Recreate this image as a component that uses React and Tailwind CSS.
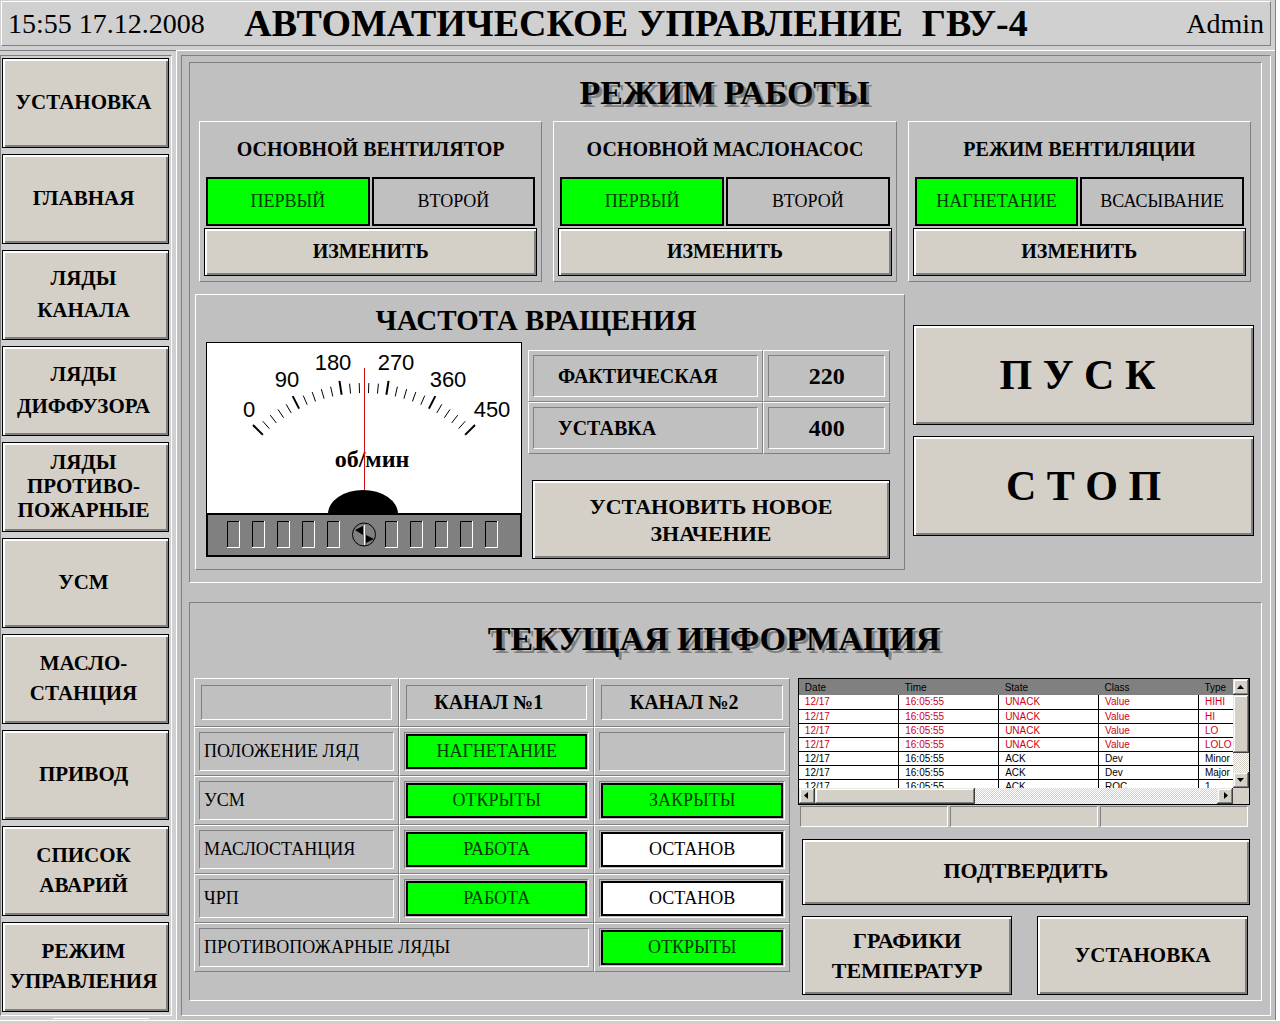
import React from "react";

const RAISED = "border border-t-white border-l-white border-b-[#808080] border-r-[#808080]";
const SUNKEN = "border border-t-[#808080] border-l-[#808080] border-b-white border-r-white";

function PushButton({ children, className = "" }) {
  return (
    <button
      type="button"
      className={`flex items-center justify-center border border-black bg-[#d4d0c8] text-center font-bold shadow-[inset_2px_2px_0_#fff,inset_-2px_-2px_0_#808080] active:shadow-[inset_2px_2px_0_#808080] ${className}`}
    >
      {children}
    </button>
  );
}

const NAV = [
  { lines: ["УСТАНОВКА"], leading: "leading-[30px]" },
  { lines: ["ГЛАВНАЯ"], leading: "leading-[30px]" },
  { lines: ["ЛЯДЫ", "КАНАЛА"], leading: "leading-[32px]" },
  { lines: ["ЛЯДЫ", "ДИФФУЗОРА"], leading: "leading-[32px]" },
  { lines: ["ЛЯДЫ", "ПРОТИВО-", "ПОЖАРНЫЕ"], leading: "leading-[24px]" },
  { lines: ["УСМ"], leading: "leading-[30px]" },
  { lines: ["МАСЛО-", "СТАНЦИЯ"], leading: "leading-[30px]" },
  { lines: ["ПРИВОД"], leading: "leading-[30px]" },
  { lines: ["СПИСОК", "АВАРИЙ"], leading: "leading-[30px]" },
  { lines: ["РЕЖИМ", "УПРАВЛЕНИЯ"], leading: "leading-[30px]" },
];

function Sidebar() {
  return (
    <nav className="flex w-44 flex-none flex-col border-t border-[#808080] pt-1 pr-1">
      <div className={`flex flex-1 flex-col gap-1.5 pt-0.5 pr-0.5 pb-[3px] pl-px ${SUNKEN}`}>
        {NAV.map((item) => (
          <PushButton
            key={item.lines.join(" ")}
            className={`min-h-[90px] w-full flex-1 pr-1 pb-0.5 text-[21px] ${item.leading}`}
          >
            <span>
              {item.lines.map((line) => (
                <span key={line} className="block">
                  {line}
                </span>
              ))}
            </span>
          </PushButton>
        ))}
      </div>
      <div className="mt-0.5 mb-px ml-[53px] h-px w-24 bg-white" />
    </nav>
  );
}

const MODES = [
  { title: "ОСНОВНОЙ ВЕНТИЛЯТОР", options: ["ПЕРВЫЙ", "ВТОРОЙ"] },
  { title: "ОСНОВНОЙ МАСЛОНАСОС", options: ["ПЕРВЫЙ", "ВТОРОЙ"] },
  { title: "РЕЖИМ ВЕНТИЛЯЦИИ", options: ["НАГНЕТАНИЕ", "ВСАСЫВАНИЕ"] },
];

function ModeCard({ title, options }) {
  return (
    <section className={`px-1 pb-[5px] ${RAISED}`}>
      <h3 className="py-3 text-center text-[20px] leading-[31px] font-bold">{title}</h3>
      <div className="grid grid-cols-2 gap-0.5 px-0.5">
        <div className="border-2 border-black bg-[#00ff00] text-center text-[18px] leading-[45px] text-[#003c00]">
          {options[0]}
        </div>
        <div className="border-2 border-black text-center text-[18px] leading-[45px]">{options[1]}</div>
      </div>
      <PushButton className="mt-0.5 h-12 w-full pb-0.5 text-[20px]">ИЗМЕНИТЬ</PushButton>
    </section>
  );
}

const CX = 158;
const CY = 194;
const TICKS = Array.from({ length: 26 }, (_, i) => {
  const a = ((-45 + i * 3.6) * Math.PI) / 180;
  const major = i % 5 === 0;
  const outer = major ? 157 : 153;
  return {
    major,
    x1: CX + outer * Math.sin(a),
    y1: CY - outer * Math.cos(a),
    x2: CX + 143 * Math.sin(a),
    y2: CY - 143 * Math.cos(a),
  };
});
const SCALE = [
  { t: "0", x: 43, y: 75 },
  { t: "90", x: 81, y: 45 },
  { t: "180", x: 127, y: 28 },
  { t: "270", x: 190, y: 28 },
  { t: "360", x: 242, y: 45 },
  { t: "450", x: 286, y: 75 },
];
const SLOTS = [21, 46, 71, 96, 121, 179, 204, 229, 254, 279];

function Gauge() {
  return (
    <svg viewBox="0 0 316 215" className="block w-full" role="img" aria-label="об/мин">
      <rect x="0.5" y="0.5" width="315" height="214" fill="#fff" stroke="#000" />
      {TICKS.map((t, i) => (
        <line key={i} x1={t.x1} y1={t.y1} x2={t.x2} y2={t.y2} stroke="#000" strokeWidth={t.major ? 2 : 1} />
      ))}
      {SCALE.map((s) => (
        <text key={s.t} x={s.x} y={s.y} textAnchor="middle" className="font-['Liberation_Sans',sans-serif] text-[22px]">
          {s.t}
        </text>
      ))}
      <text x="166" y="125" textAnchor="middle" className="text-[24px] font-bold">
        об/мин
      </text>
      <path d="M158.5 26V150" stroke="#d01010" />
      <ellipse cx="157" cy="172" rx="35" ry="24" />
      <rect x="1" y="172" width="314" height="42" fill="#808080" stroke="#000" strokeWidth="2" />
      {SLOTS.map((x) => (
        <g key={x} fill="none">
          <path d={`M${x + 0.5} 205V179.5H${x + 13}`} stroke="#000" />
          <path d={`M${x} 205.5H${x + 12.5}V179`} stroke="#fff" />
        </g>
      ))}
      <circle cx="158" cy="192.5" r="11.5" fill="none" stroke="#000" />
      <path d="M158.5 183V203" stroke="#fff" />
      <path d="M149 188L157 184V193ZM168 197L160 193V201Z" />
    </svg>
  );
}

function SpeedPanel() {
  const rows = [
    ["ФАКТИЧЕСКАЯ", "220"],
    ["УСТАВКА", "400"],
  ];
  return (
    <section className={`pr-3.5 pb-2.5 pl-2.5 ${RAISED}`}>
      <h3 className="pt-1.5 pr-6 pb-0.5 text-center text-[29px] leading-[39px] font-bold">ЧАСТОТА ВРАЩЕНИЯ</h3>
      <div className="grid grid-cols-[316fr_362fr] gap-1.5">
        <Gauge />
        <div className="flex flex-col pt-2">
          <table className="w-full table-fixed border-separate border-spacing-0 font-bold">
            <tbody>
              {rows.map(([name, value]) => (
                <tr key={name}>
                  <th scope="row" className={`w-[65%] p-1 text-left ${RAISED}`}>
                    <div className={`pl-6 text-[20px] leading-10 ${SUNKEN}`}>{name}</div>
                  </th>
                  <td className={`p-1 text-center ${RAISED}`}>
                    <div className={`text-[24px] leading-10 ${SUNKEN}`}>{value}</div>
                  </td>
                </tr>
              ))}
            </tbody>
          </table>
          <PushButton className="mt-[26px] ml-1 h-[79px] text-[22px] leading-[27px]">
            <span>
              УСТАНОВИТЬ НОВОЕ
              <br />
              ЗНАЧЕНИЕ
            </span>
          </PushButton>
        </div>
      </div>
    </section>
  );
}

function Lamp({ text, on }) {
  return (
    <div className={`p-px ${SUNKEN}`}>
      <div
        className={`border-2 border-black text-center text-[18px] leading-[31px] ${
          on ? "bg-[#00ff00] text-[#003c00]" : "bg-white"
        }`}
      >
        {text}
      </div>
    </div>
  );
}

const STATUS = [
  { name: "ПОЛОЖЕНИЕ ЛЯД", cells: [{ t: "НАГНЕТАНИЕ", on: true }, null] },
  { name: "УСМ", cells: [{ t: "ОТКРЫТЫ", on: true }, { t: "ЗАКРЫТЫ", on: true }] },
  { name: "МАСЛОСТАНЦИЯ", cells: [{ t: "РАБОТА", on: true }, { t: "ОСТАНОВ", on: false }] },
  { name: "ЧРП", cells: [{ t: "РАБОТА", on: true }, { t: "ОСТАНОВ", on: false }] },
  { name: "ПРОТИВОПОЖАРНЫЕ ЛЯДЫ", span: 2, cells: [{ t: "ОТКРЫТЫ", on: true }] },
];

function StatusTable() {
  return (
    <table className="w-full table-fixed border-separate border-spacing-0 self-start">
      <thead>
        <tr>
          <td className={`w-[205px] p-1.5 ${RAISED}`}>
            <div className={`h-[35px] ${SUNKEN}`} />
          </td>
          {["КАНАЛ №1", "КАНАЛ №2"].map((t) => (
            <th key={t} scope="col" className={`p-1.5 ${RAISED}`}>
              <div className={`pr-4 text-[20px] leading-[33px] font-bold ${SUNKEN}`}>{t}</div>
            </th>
          ))}
        </tr>
      </thead>
      <tbody>
        {STATUS.map((row) => (
          <tr key={row.name}>
            <th scope="row" colSpan={row.span || 1} className={`p-1 text-left font-normal ${RAISED}`}>
              <div className={`pl-1 text-[18px] leading-[37px] whitespace-nowrap ${SUNKEN}`}>{row.name}</div>
            </th>
            {row.cells.map((c, i) => (
              <td key={i} className={`p-1 ${RAISED}`}>
                {c ? <Lamp text={c.t} on={c.on} /> : <div className={`h-[39px] ${SUNKEN}`} />}
              </td>
            ))}
          </tr>
        ))}
      </tbody>
    </table>
  );
}

const ALARMS = [
  ["12/17", "16:05:55", "UNACK", "Value", "HIHI"],
  ["12/17", "16:05:55", "UNACK", "Value", "HI"],
  ["12/17", "16:05:55", "UNACK", "Value", "LO"],
  ["12/17", "16:05:55", "UNACK", "Value", "LOLO"],
  ["12/17", "16:05:55", "ACK", "Dev", "Minor"],
  ["12/17", "16:05:55", "ACK", "Dev", "Major"],
  ["12/17", "16:05:55", "ACK", "ROC", "1"],
];

const TRACK = "bg-[repeating-conic-gradient(#ffffff_0_25%,#d4d0c8_0_50%)] bg-[length:2px_2px]";
const THUMB =
  "bg-[#d4d0c8] shadow-[inset_-1px_-1px_0_#404040,inset_1px_1px_0_#e8e6e0,inset_-2px_-2px_0_#808080,inset_2px_2px_0_#fff]";

function ScrollButton({ label, d }) {
  return (
    <button type="button" aria-label={label} className={`h-4 w-4 flex-none ${THUMB}`}>
      <svg viewBox="0 0 16 16" className="block h-4 w-4">
        <path d={d} />
      </svg>
    </button>
  );
}

function AlarmList() {
  return (
    <div className="grid h-[127px] grid-cols-[1fr_16px] grid-rows-[1fr_16px] border border-black bg-[#d4d0c8]">
      <div className="min-h-0 min-w-0 overflow-hidden bg-white font-['Liberation_Sans',sans-serif] text-[10px]">
        <table className="w-[500px] table-fixed border-collapse text-left leading-[13px]">
          <thead>
            <tr className="bg-[#808080]">
              {["Date", "Time", "State", "Class", "Type"].map((h) => (
                <th key={h} scope="col" className="h-4 p-0 pl-1.5 font-normal">
                  {h}
                </th>
              ))}
            </tr>
          </thead>
          <tbody>
            {ALARMS.map((row, i) => (
              <tr key={i} className={`border-b border-black ${i < 4 ? "text-[#d00018]" : ""}`}>
                {row.map((c, j) => (
                  <td key={j} className="h-3.5 border-r border-black p-0 pl-1.5">
                    {c}
                  </td>
                ))}
              </tr>
            ))}
          </tbody>
        </table>
      </div>
      <div className={`flex flex-col ${TRACK}`}>
        <ScrollButton label="Вверх" d="M4 10H11L7.5 6Z" />
        <div className={`h-[58px] ${THUMB}`} />
        <div className="flex-1" />
        <ScrollButton label="Вниз" d="M4 6H11L7.5 10Z" />
      </div>
      <div className={`flex ${TRACK}`}>
        <ScrollButton label="Влево" d="M9 4V11L5 7.5Z" />
        <div className={`w-[37%] ${THUMB}`} />
        <div className="flex-1" />
        <ScrollButton label="Вправо" d="M7 4V11L11 7.5Z" />
      </div>
      <div />
    </div>
  );
}

function PanelTitle({ children, className = "" }) {
  return (
    <h2 className={`text-center text-[34px] font-bold [text-shadow:3px_3px_0_#808080] ${className}`}>{children}</h2>
  );
}

export default function App() {
  return (
    <div className="flex min-h-screen flex-col bg-white font-['Liberation_Serif',serif] text-black">
      <div className="mr-1 flex flex-1 flex-col border-r border-[#808080] bg-[#d0d0d0]">
        <header className={`mt-px mr-1 mb-1 ml-px flex items-center justify-between px-1.5 ${RAISED}`}>
          <time className="w-[232px] text-[28px] leading-[43px]">15:55 17.12.2008</time>
          <h1 className="text-[38px] leading-[43px] font-bold whitespace-pre">АВТОМАТИЧЕСКОЕ УПРАВЛЕНИЕ  ГВУ-4</h1>
          <div className="w-[232px] text-right text-[28px] leading-[43px]">Admin</div>
        </header>
        <div className="flex flex-1">
          <Sidebar />
          <main className="flex min-w-0 flex-1 flex-col border-t border-l border-white bg-[#c0c0c0] pt-1 pr-1 pb-1 pl-1">
            <div className={`flex flex-1 flex-col gap-[19px] pt-1.5 pr-2 pb-3.5 pl-[7px] ${SUNKEN}`}>
              <section className={`pr-[7px] pb-3 pl-[5px] ${SUNKEN}`}>
                <PanelTitle className="pt-[9px] pb-[7px] leading-[42px]">РЕЖИМ РАБОТЫ</PanelTitle>
                <div className="grid grid-cols-3 gap-[11px] pr-[3px] pl-1">
                  {MODES.map((m) => (
                    <ModeCard key={m.title} {...m} />
                  ))}
                </div>
                <div className="mt-3 grid grid-cols-[710fr_341fr] gap-2">
                  <SpeedPanel />
                  <div className="flex flex-col gap-[11px] pt-[31px]">
                    <PushButton className="h-[100px] pr-3 text-[42px]">П У С К</PushButton>
                    <PushButton className="h-[100px] text-[42px]">С Т О П</PushButton>
                  </div>
                </div>
              </section>
              <section className={`flex-1 pr-[11px] pl-1 ${SUNKEN}`}>
                <PanelTitle className="pt-[15px] pr-4 pb-[18px] leading-[42px]">ТЕКУЩАЯ ИНФОРМАЦИЯ</PanelTitle>
                <div className="grid grid-cols-[597fr_453fr] gap-2">
                  <StatusTable />
                  <div className="flex min-w-0 flex-col">
                    <AlarmList />
                    <div className="mt-px grid grid-cols-3 gap-0.5 px-0.5">
                      {[0, 1, 2].map((i) => (
                        <div key={i} className={`h-[21px] bg-[#d4d0c8] ${SUNKEN}`} />
                      ))}
                    </div>
                    <PushButton className="mt-3 ml-1 h-[66px] pb-1 text-[22px]">ПОДТВЕРДИТЬ</PushButton>
                    <div className="mt-[11px] mr-0.5 ml-1 grid grid-cols-2 gap-[25px]">
                      <PushButton className="h-[79px] text-[22px] leading-[30px]">
                        <span>
                          ГРАФИКИ
                          <br />
                          ТЕМПЕРАТУР
                        </span>
                      </PushButton>
                      <PushButton className="h-[79px] text-[21px]">УСТАНОВКА</PushButton>
                    </div>
                  </div>
                </div>
              </section>
            </div>
          </main>
        </div>
      </div>
      <footer className="h-[5px] border-t border-white bg-[#d4d0c8]" />
    </div>
  );
}
